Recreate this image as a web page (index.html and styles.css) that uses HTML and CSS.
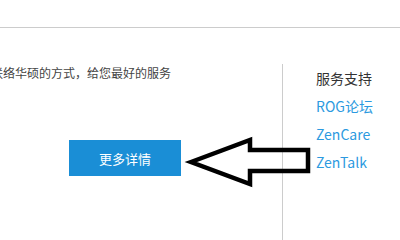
FILE: index.html
```html
<!DOCTYPE html>
<html lang="zh-CN">
<head>
  <meta charset="UTF-8" />
  <title>服务支持</title>
  <link rel="stylesheet" href="styles.css">
</head>
<body>
  <div class="top-bar"></div>

  <div class="content">
    <div class="main">
      <p class="intro">联络华硕的方式，给您最好的服务</p>
      <a href="#" class="btn-more">更多详情</a>
    </div>

    <div class="side">
      <h3>服务支持</h3>
      <a href="#">ROG论坛</a>
      <a href="#">ZenCare</a>
      <a href="#">ZenTalk</a>
    </div>
  </div>

  <!-- annotation arrow drawn over the page -->
  <svg class="arrow" width="400" height="240" viewBox="0 0 400 240">
    <polygon points="191,162 250,140 250,150 308,150 308,171 250,171 250,184"
             fill="none" stroke="#000" stroke-width="4.5" stroke-linejoin="miter"/>
  </svg>
</body>
</html>
```

FILE: styles.css
```css
body {
  margin: 0;
  padding: 0;
  width: 400px;
  height: 240px;
  overflow: hidden;
  background: #fff;
  font-family: "Noto Sans CJK SC", "Noto Sans", sans-serif;
  position: relative;
}

.top-bar {
  height: 27px;
  border-bottom: 1px solid #cccccc;
}

.content {
  display: flex;
  padding-top: 36px;
}

.main {
  width: 282px;
}

.intro {
  margin: 0 0 0 -9px;
  font-size: 12px;
  line-height: 18px;
  color: #444;
  white-space: nowrap;
}

.btn-more {
  display: flex;
  align-items: center;
  justify-content: center;
  width: 112px;
  height: 36px;
  margin: 58px 0 0 69px;
  background: #1a8ed6;
  color: #fff;
  font-size: 13px;
  text-decoration: none;
}

.side {
  display: flex;
  flex-direction: column;
  border-left: 1px solid #cccccc;
  padding-left: 33px;
  height: 180px;
}

.side h3 {
  margin: 0;
  font-size: 14px;
  font-weight: normal;
  line-height: 28px;
  color: #333;
}

.side a {
  font-size: 14px;
  line-height: 28px;
  color: #2c9ae0;
  text-decoration: none;
}

.arrow {
  position: absolute;
  left: 0;
  top: 0;
}
```
